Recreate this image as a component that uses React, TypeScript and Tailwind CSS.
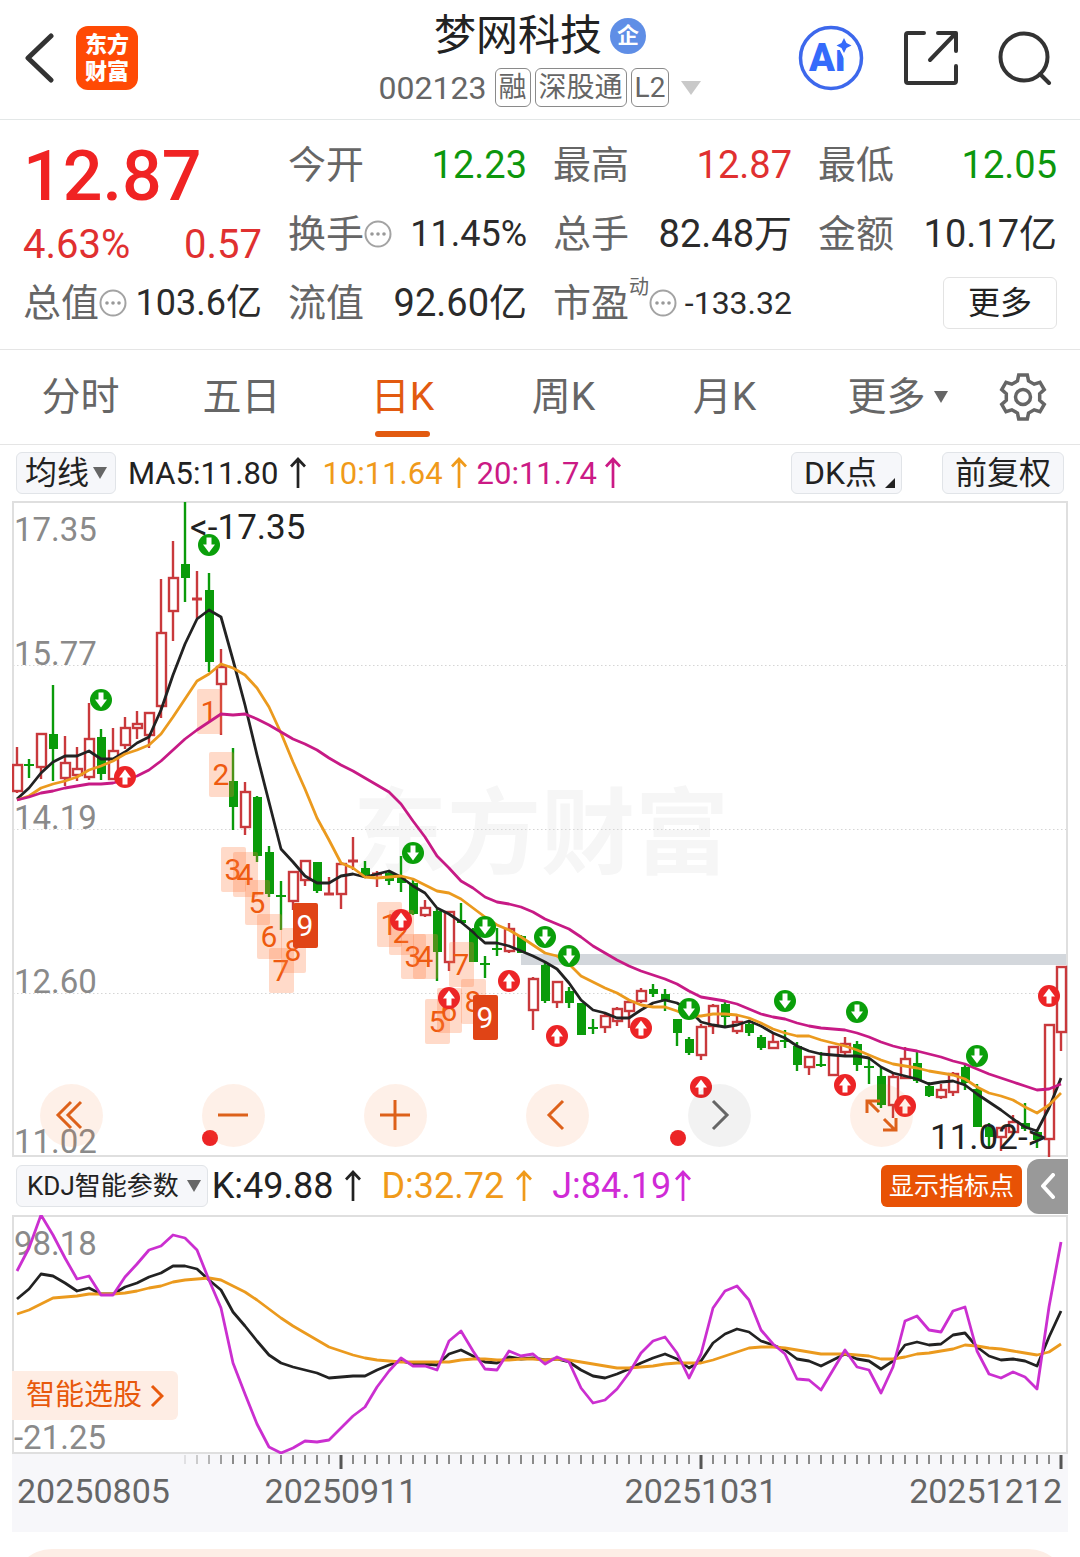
import { useState } from 'react'
import type { ReactNode } from 'react'
import { clsx } from 'clsx'

type Candle = [high: number, top: number, bottom: number, low: number, dir: 'up' | 'down']

// Vertical positions in the canvas, one row per trading day
const candles: Candle[] = [
  [747, 765, 791, 793, 'up'], [759, 765, 765, 778, 'down'], [733, 734, 767, 779, 'up'], [685, 734, 749, 781, 'down'],
  [736, 763, 778, 786, 'up'], [747, 769, 775, 781, 'up'], [703, 739, 777, 780, 'up'], [729, 737, 774, 780, 'down'],
  [728, 751, 779, 779, 'up'], [717, 728, 745, 749, 'up'], [711, 724, 728, 739, 'up'], [712, 713, 735, 748, 'up'],
  [579, 633, 706, 718, 'up'], [541, 578, 611, 641, 'up'], [502, 564, 578, 602, 'down'], [571, 599, 599, 618, 'up'],
  [573, 590, 662, 672, 'down'], [649, 667, 684, 735, 'up'], [748, 781, 807, 830, 'down'], [782, 792, 827, 835, 'up'],
  [796, 797, 856, 862, 'down'], [846, 852, 894, 897, 'down'], [881, 896, 896, 930, 'down'], [872, 872, 901, 910, 'up'],
  [861, 861, 880, 886, 'up'], [862, 862, 891, 893, 'down'], [877, 894, 894, 894, 'up'], [864, 864, 894, 909, 'up'],
  [837, 861, 861, 870, 'up'], [861, 868, 875, 877, 'down'], [871, 874, 874, 887, 'up'], [872, 873, 881, 885, 'down'],
  [856, 876, 883, 892, 'down'], [880, 883, 914, 915, 'down'], [900, 908, 915, 917, 'up'], [909, 911, 952, 981, 'down'],
  [912, 912, 962, 971, 'up'], [903, 920, 923, 923, 'down'], [928, 929, 962, 962, 'down'], [956, 964, 964, 978, 'down'],
  [928, 949, 949, 956, 'down'], [923, 929, 951, 953, 'up'], [935, 936, 953, 953, 'down'], [977, 979, 1010, 1030, 'up'],
  [963, 965, 1001, 1003, 'down'], [982, 982, 1002, 1008, 'up'], [987, 991, 1003, 1008, 'down'], [1003, 1003, 1035, 1035, 'down'],
  [1019, 1028, 1028, 1034, 'down'], [1013, 1016, 1027, 1033, 'up'], [1007, 1009, 1021, 1026, 'up'], [1000, 1002, 1011, 1028, 'up'],
  [988, 991, 1001, 1003, 'up'], [984, 989, 994, 997, 'down'], [989, 994, 1000, 1011, 'down'], [1019, 1019, 1033, 1046, 'down'],
  [1037, 1039, 1053, 1055, 'down'], [1024, 1027, 1055, 1060, 'up'], [1004, 1006, 1026, 1034, 'up'], [1002, 1004, 1017, 1027, 'down'],
  [1016, 1022, 1031, 1034, 'up'], [1022, 1024, 1033, 1036, 'down'], [1035, 1037, 1048, 1050, 'down'], [1033, 1042, 1048, 1048, 'up'],
  [1030, 1041, 1041, 1048, 'down'], [1042, 1046, 1065, 1071, 'down'], [1056, 1057, 1067, 1075, 'up'], [1052, 1065, 1065, 1067, 'down'],
  [1047, 1047, 1075, 1075, 'up'], [1037, 1044, 1052, 1057, 'up'], [1041, 1044, 1065, 1071, 'down'], [1058, 1067, 1067, 1084, 'down'],
  [1067, 1076, 1105, 1108, 'down'], [1072, 1077, 1105, 1118, 'up'], [1047, 1059, 1078, 1078, 'up'], [1052, 1063, 1081, 1083, 'down'],
  [1082, 1086, 1096, 1097, 'down'], [1084, 1090, 1097, 1099, 'up'], [1072, 1074, 1092, 1096, 'up'], [1065, 1067, 1083, 1090, 'down'],
  [1084, 1089, 1127, 1127, 'down'], [1123, 1127, 1137, 1147, 'down'], [1128, 1128, 1137, 1151, 'up'], [1115, 1122, 1132, 1134, 'up'],
  [1103, 1123, 1129, 1131, 'down'], [1130, 1132, 1140, 1148, 'down'], [1025, 1025, 1139, 1157, 'up'], [967, 967, 1032, 1051, 'up'],
]

const ma5 = [
  799, 788, 773, 762, 756, 756, 751, 759, 759, 752, 743, 737, 710, 675, 644, 619, 610, 617, 660, 705, 755, 802,
  849, 862, 876, 883, 883, 876, 874, 877, 874, 871, 877, 886, 893, 908, 914, 922, 932, 943, 943, 946, 951, 956,
  962, 969, 983, 1000, 1010, 1013, 1018, 1018, 1010, 1003, 1000, 1003, 1010, 1022, 1025, 1027, 1025, 1021, 1026,
  1033, 1038, 1046, 1051, 1054, 1055, 1056, 1056, 1058, 1067, 1073, 1076, 1079, 1084, 1082, 1081, 1085, 1094,
  1102, 1110, 1119, 1127, 1131, 1108, 1078,
]
const ma10 = [
  800, 796, 788, 784, 781, 777, 770, 766, 761, 754, 750, 745, 734, 717, 699, 681, 674, 664, 668, 675, 688, 707,
  733, 762, 789, 818, 840, 863, 868, 877, 878, 877, 876, 879, 885, 891, 893, 899, 908, 917, 925, 930, 937, 945,
  953, 956, 964, 976, 982, 988, 993, 1000, 1005, 1007, 1007, 1011, 1016, 1016, 1014, 1014, 1015, 1018, 1023,
  1029, 1033, 1036, 1036, 1040, 1043, 1046, 1050, 1055, 1060, 1064, 1066, 1068, 1071, 1073, 1075, 1079, 1087,
  1093, 1096, 1100, 1107, 1113, 1105, 1093,
]
const ma20 = [
  800, 797, 793, 791, 788, 786, 784, 784, 783, 780, 776, 770, 761, 750, 739, 730, 722, 714, 715, 714, 719, 725,
  732, 739, 744, 750, 758, 765, 771, 778, 785, 792, 804, 821, 837, 856, 868, 881, 888, 897, 902, 904, 907, 912,
  919, 924, 929, 937, 946, 953, 960, 966, 971, 975, 979, 984, 991, 997, 999, 1001, 1004, 1009, 1014, 1017, 1019,
  1023, 1026, 1028, 1029, 1030, 1033, 1037, 1042, 1046, 1049, 1051, 1054, 1057, 1061, 1064, 1069, 1074, 1078,
  1082, 1086, 1090, 1089, 1084,
]

const kLine = [
  1299, 1289, 1274, 1276, 1283, 1291, 1288, 1294, 1294, 1287, 1283, 1277, 1273, 1266, 1266, 1269, 1280, 1290,
  1312, 1326, 1341, 1355, 1363, 1367, 1370, 1373, 1378, 1377, 1376, 1376, 1370, 1365, 1361, 1364, 1364, 1365,
  1354, 1350, 1356, 1362, 1363, 1357, 1359, 1358, 1360, 1359, 1362, 1370, 1376, 1378, 1374, 1369, 1363, 1358,
  1354, 1359, 1368, 1361, 1343, 1334, 1329, 1332, 1341, 1345, 1350, 1359, 1361, 1366, 1360, 1354, 1359, 1361,
  1369, 1361, 1345, 1342, 1345, 1344, 1335, 1333, 1347, 1356, 1360, 1359, 1361, 1366, 1337, 1311,
]
const dLine = [
  1314, 1310, 1304, 1298, 1297, 1296, 1294, 1294, 1294, 1293, 1291, 1288, 1286, 1282, 1280, 1279, 1278, 1280,
  1286, 1292, 1300, 1309, 1318, 1326, 1333, 1340, 1347, 1351, 1355, 1358, 1360, 1361, 1362, 1362, 1362, 1362,
  1362, 1360, 1359, 1359, 1360, 1360, 1359, 1359, 1360, 1359, 1360, 1362, 1364, 1366, 1368, 1368, 1367, 1366,
  1364, 1363, 1363, 1363, 1360, 1356, 1352, 1348, 1347, 1347, 1348, 1350, 1352, 1354, 1354, 1354, 1355, 1356,
  1359, 1359, 1357, 1354, 1353, 1351, 1349, 1345, 1346, 1348, 1349, 1351, 1353, 1355, 1352, 1344,
]
const jLine = [
  1271, 1248, 1215, 1235, 1258, 1279, 1276, 1295, 1295, 1277, 1264, 1250, 1246, 1235, 1238, 1250, 1280, 1308,
  1363, 1394, 1424, 1447, 1453, 1448, 1441, 1442, 1440, 1428, 1416, 1407, 1387, 1371, 1358, 1366, 1366, 1370,
  1341, 1331, 1351, 1369, 1370, 1351, 1356, 1354, 1364, 1357, 1362, 1388, 1403, 1400, 1389, 1373, 1353, 1341,
  1337, 1353, 1378, 1354, 1308, 1291, 1286, 1300, 1330, 1344, 1354, 1379, 1380, 1390, 1370, 1350, 1367, 1370,
  1393, 1367, 1321, 1316, 1330, 1332, 1311, 1307, 1351, 1374, 1378, 1372, 1377, 1389, 1307, 1242,
]

// [day index, top, digit]
const nineTurn: [number, number, number][] = [
  [16, 689, 1], [17, 752, 2], [18, 847, 3], [19, 852, 4], [20, 880, 5], [21, 914, 6], [22, 948, 7], [23, 928, 8], [24, 903, 9],
  [31, 902, 1], [32, 910, 2], [33, 934, 3], [34, 934, 4], [35, 999, 5], [36, 988, 6], [37, 942, 7], [38, 979, 8], [39, 995, 9],
]

const sellMarks = [[16, 545], [7, 700], [33, 853], [39, 927], [44, 937], [46, 956], [56, 1009], [64, 1001], [70, 1012], [80, 1056]]
const buyMarks = [[9, 777], [32, 920], [36, 998], [41, 981], [45, 1036], [52, 1028], [57, 1087], [69, 1085], [74, 1106], [86, 996]]

const dayX = (i: number) => 17 + i * 12
const toPoints = (ys: number[]) => ys.map((y, i) => `${dayX(i)},${y}`).join(' ')

const gearPath = (() => {
  const pts: string[] = []
  for (let t = 0; t < 6; t++) {
    for (const [r, off] of [[17, -19], [22.5, -11], [22.5, 11], [17, 19]]) {
      const a = ((t * 60 + off) * Math.PI) / 180
      pts.push(`${(24 + r * Math.sin(a)).toFixed(2)} ${(24 - r * Math.cos(a)).toFixed(2)}`)
    }
  }
  return `M${pts.join('L')}Z`
})()

function CandleBar({ i, data }: { i: number; data: Candle }) {
  const [high, top, bottom, low, dir] = data
  const x = dayX(i)
  const color = dir === 'up' ? '#c9393c' : '#0a9b0a'
  const flat = bottom - top < 2
  return (
    <g stroke={color} strokeWidth="2.400">
      <line x1={x} x2={x} y1={high} y2={flat ? low : top} />
      {!flat && <line x1={x} x2={x} y1={bottom} y2={low} />}
      {flat ? (
        <line x1={x - 5} x2={x + 5} y1={top} y2={top} strokeWidth={dir === 'up' ? 3 : 2} />
      ) : (
        <rect x={x - 4} y={top} width="9" height={bottom - top} fill={dir === 'up' ? 'white' : color} strokeWidth={dir === 'up' ? 2.4 : 0} />
      )}
    </g>
  )
}

function Mark({ i, y, up }: { i: number; y: number; up?: boolean }) {
  return (
    <g transform={`translate(${dayX(i)} ${y})${up ? ' rotate(180)' : ''}`}>
      <circle r="11" fill={up ? '#ec2426' : '#0a9f0a'} />
      <path d="M-2.500 -7.500h5v7h3.500L0 7.500L-6 -.500h3.500z" fill="white" />
    </g>
  )
}

function UpArrow() {
  return (
    <svg viewBox="0 0 16 32" className="h-8 w-4" fill="none" stroke="currentColor" strokeWidth="2.700" aria-hidden="true">
      <path d="M8 31V2M1 9.500L8 2l7 7.500" />
    </svg>
  )
}

function Caret({ className }: { className?: string }) {
  return (
    <svg viewBox="0 0 14 12" className={clsx('h-3 w-3.5', className)} fill="currentColor" aria-hidden="true">
      <path d="M0 0h14L7 12z" />
    </svg>
  )
}

function Hint() {
  return (
    <svg viewBox="0 0 28 28" className="h-7 w-7 shrink-0" fill="none" stroke="#a3a3a3" strokeWidth="2" aria-hidden="true">
      <circle cx="14" cy="14" r="12.500" />
      <g fill="#999" stroke="none">
        <circle cx="8" cy="14" r="1.800" />
        <circle cx="14" cy="14" r="1.800" />
        <circle cx="20" cy="14" r="1.800" />
      </g>
    </svg>
  )
}

function Quote({ label, hint, sup, tone, size, children }: {
  label: string
  hint?: boolean
  sup?: string
  tone?: string
  size?: string
  children: ReactNode
}) {
  return (
    <div className="flex h-[69px] items-center justify-between">
      <dt className="flex items-center text-[38px] text-[#666]">
        {label}
        {sup && <span className="mb-8 text-xl">{sup}</span>}
        {hint && <Hint />}
      </dt>
      <dd className={clsx(tone ?? 'text-[#2b2b2b]', size ?? 'text-[38px]')}>{children}</dd>
    </div>
  )
}

function Tag({ children }: { children: ReactNode }) {
  return <span className="flex h-[39px] items-center rounded-md border border-[#8a8a8a] px-[3px] text-[28px]">{children}</span>
}

const chipClass = 'flex h-[42px] items-center rounded-md border border-[#e1e4e8] bg-[#f6f7fa] text-[#222]'

function Header() {
  return (
    <header className="grid h-[120px] grid-cols-[1fr_auto_1fr] items-center border-b border-[#e3e7e7] px-6 pb-1">
      <div className="flex items-center gap-[22px]">
        <button type="button" aria-label="返回">
          <svg viewBox="0 0 30 50" className="h-[50px] w-[30px]" fill="none" stroke="#333" strokeWidth="5" strokeLinecap="round" strokeLinejoin="round">
            <path d="M27 3L4 25l23 22" />
          </svg>
        </button>
        <div className="flex h-16 w-[62px] flex-col items-center justify-center rounded-xl bg-[#ff4a05] text-[22px] leading-[27px] font-black text-white">
          <span>东方</span>
          <span>财富</span>
        </div>
      </div>

      <div className="flex flex-col items-center gap-1">
        <div className="flex h-14 items-center gap-2">
          <h1 className="text-[42px] text-[#222]">梦网科技</h1>
          <span className="flex h-9 w-9 items-center justify-center rounded-full bg-[#5f8ee6] text-[22px] font-bold text-white">企</span>
        </div>
        <div className="flex items-center gap-1 text-[#666]">
          <span className="mr-1 text-[32px]">002123</span>
          <Tag>融</Tag>
          <Tag>深股通</Tag>
          <Tag>L2</Tag>
          <svg viewBox="0 0 20 14" className="ml-2 h-3.5 w-5" fill="#c9c9c9" aria-hidden="true">
            <path d="M0 0h20L10 14z" />
          </svg>
        </div>
      </div>

      <div className="flex items-center justify-end gap-10 pr-1">
        <button type="button" aria-label="Ai">
          <svg viewBox="0 0 66 66" className="h-[66px] w-[66px]">
            <circle cx="33" cy="33" r="30.500" fill="none" stroke="#3d68ec" strokeWidth="3.500" />
            <text x="11" y="46" fontSize="38" fontWeight="900" fill="#356bfb">Ai</text>
            <path d="M46 13l2.500 5 5 2.500-5 2.500-2.500 5-2.500-5-5-2.500 5-2.500z" fill="#356bfb" stroke="white" strokeWidth="5" paintOrder="stroke" />
          </svg>
        </button>
        <button type="button" aria-label="分享">
          <svg viewBox="0 0 54 54" className="h-[54px] w-[54px]" fill="none" stroke="#333" strokeWidth="4" strokeLinecap="round" strokeLinejoin="round">
            <path d="M20 2H4a2 2 0 0 0-2 2v46a2 2 0 0 0 2 2h46a2 2 0 0 0 2-2V35M34 2h18v18M51 3L26 29" />
          </svg>
        </button>
        <button type="button" aria-label="搜索">
          <svg viewBox="0 0 54 54" className="h-[54px] w-[54px]" fill="none" stroke="#333" strokeWidth="4" strokeLinecap="round">
            <circle cx="26" cy="26" r="23.500" />
            <path d="M42 43l9 9" />
          </svg>
        </button>
      </div>
    </header>
  )
}

function Quotes() {
  return (
    <section className="grid grid-cols-4 gap-x-[26px] border-b border-[#e5e5e5] px-[23px] pt-2.5 pb-3">
      <div>
        <div className="flex h-[92px] items-center text-[70px] font-medium text-[#f02323]">12.87</div>
        <div className="flex h-[46px] items-center justify-between text-[40px] text-[#e03030]">
          <span>4.63%</span>
          <span>0.57</span>
        </div>
        <dl><Quote label="总值" hint size="text-[36px]">103.6亿</Quote></dl>
      </div>
      <dl>
        <Quote label="今开" tone="text-[#0d970d]">12.23</Quote>
        <Quote label="换手" hint size="text-[36px]">11.45%</Quote>
        <Quote label="流值">92.60亿</Quote>
      </dl>
      <dl>
        <Quote label="最高" tone="text-[#e03030]">12.87</Quote>
        <Quote label="总手">82.48万</Quote>
        <Quote label="市盈" sup="动" hint size="text-[32px]">-133.32</Quote>
      </dl>
      <div>
        <dl>
          <Quote label="最低" tone="text-[#0d970d]">12.05</Quote>
          <Quote label="金额">10.17亿</Quote>
        </dl>
        <div className="flex h-[69px] items-center justify-end">
          <button type="button" className="h-[52px] rounded-md border border-[#e3e3e3] px-6 text-[32px] text-[#222]">更多</button>
        </div>
      </div>
    </section>
  )
}

function Tabs() {
  const [active, setActive] = useState('日K')
  return (
    <nav className="grid h-[95px] grid-cols-[repeat(6,1fr)_114px] border-b border-[#e5e5e5] text-[39px]">
      {['分时', '五日', '日K', '周K', '月K', '更多'].map(name => (
        <button
          key={name}
          type="button"
          onClick={() => setActive(name)}
          className={clsx(
            'relative flex items-center justify-center gap-2',
            name === active ? 'text-[#e25a10]' : 'text-[#666]',
            name === '更多' && 'pl-6',
          )}
        >
          {name}
          {name === '更多' && <Caret />}
          {name === active && <span className="absolute bottom-[7px] h-1.5 w-[55px] rounded-full bg-[#e25a10]" />}
        </button>
      ))}
      <button type="button" aria-label="设置" className="flex items-center justify-center">
        <svg viewBox="0 0 48 48" className="h-12 w-12" fill="none" stroke="#666" strokeWidth="3.500">
          <path d={gearPath} />
          <circle cx="24" cy="24" r="7.500" />
        </svg>
      </button>
    </nav>
  )
}

function MaBar() {
  return (
    <div className="flex h-14 items-center px-4 text-[31px]">
      <button type="button" className={clsx(chipClass, 'gap-1 px-2 text-[32px]')}>
        均线
        <Caret className="text-[#666]" />
      </button>
      <span className="ml-3 flex items-center gap-3 text-[#222]">MA5:11.80<UpArrow /></span>
      <span className="ml-4 flex items-center gap-2 text-[#f09a1a]">10:11.64<UpArrow /></span>
      <span className="ml-2.5 flex items-center gap-2 text-[#cb1a85]">20:11.74<UpArrow /></span>
      <button type="button" className={clsx(chipClass, 'ml-auto gap-2 pr-1.5 pl-3 text-[32px]')}>
        DK点
        <svg viewBox="0 0 10 10" className="mt-5 h-2.5 w-2.5" fill="#222" aria-hidden="true">
          <path d="M10 0v10H0z" />
        </svg>
      </button>
      <button type="button" className={clsx(chipClass, 'ml-10 px-3 text-[32px]')}>前复权</button>
    </div>
  )
}

const tools = [
  { label: '最左', d: 'M31 18L18 31l13 13M41 18L28 31l13 13' },
  { label: '缩小', d: 'M16 31h30' },
  { label: '放大', d: 'M16 31h30M31 16v30' },
  { label: '左移', d: 'M37 17L23 31l14 14' },
  { label: '右移', d: 'M25 17l14 14-14 14', disabled: true },
  { label: '全屏', d: 'M29 28L18 17M17 29V17h13M34 35l11 11M46 34v12H33' },
]

function PriceChart() {
  return (
    <div className="relative mx-3">
      <svg viewBox="12 501 1056 656" className="block w-full">
        <text x="541" y="867" fontSize="94" fontWeight="700" fill="#f6f6f6" textAnchor="middle">东方财富</text>
        <rect x="521" y="954" width="547" height="11" fill="#d3d7dc" />
        <g stroke="#d5d5d5" strokeDasharray="1.500 2.500">
          <path d="M13 665.500H1067M13 829.500H1067M13 993.500H1067" />
        </g>
        <rect x="13" y="502" width="1054" height="654" fill="none" stroke="#dfdfdf" strokeWidth="2" />

        {candles.map((c, i) => <CandleBar key={i} i={i} data={c} />)}

        {nineTurn.map(([i, y, n]) => (
          <g key={`${i}-${n}`}>
            <rect x={dayX(i) - 12} y={y} width="25" height="45" rx="2" fill={n === 9 ? '#e04416' : '#ff7a3d'} fillOpacity={n === 9 ? 1 : 0.28} />
            <text x={dayX(i)} y={y + 33} fontSize="30" textAnchor="middle" fill={n === 9 ? 'white' : '#ee5a10'}>{n}</text>
          </g>
        ))}

        <g fill="none" strokeWidth="2.800" strokeLinejoin="round">
          <polyline points={toPoints(ma5)} stroke="#222" />
          <polyline points={toPoints(ma10)} stroke="#eb9a1e" />
          <polyline points={toPoints(ma20)} stroke="#c71a85" />
        </g>

        <g fill="#8a8a8a" fontSize="33">
          <text x="14" y="541">17.35</text>
          <text x="14" y="665">15.77</text>
          <text x="14" y="829">14.19</text>
          <text x="14" y="993">12.60</text>
          <text x="14" y="1153">11.02</text>
        </g>
        <g fill="#222" fontSize="35">
          <text x="190" y="539">&lt;-17.35</text>
          <text x="930" y="1149">11.02-&gt;</text>
        </g>

        {sellMarks.map(([i, y]) => <Mark key={i} i={i} y={y} />)}
        {buyMarks.map(([i, y]) => <Mark key={i} i={i} y={y} up />)}
        <circle cx="210" cy="1138" r="8" fill="#ec2426" />
        <circle cx="678" cy="1138" r="8" fill="#ec2426" />
      </svg>

      <div className="absolute inset-x-7 bottom-2.5 flex gap-[99px]">
        {tools.map(t => (
          <button
            key={t.label}
            type="button"
            aria-label={t.label}
            disabled={t.disabled}
            className={clsx('h-[63px] w-[63px] rounded-full', t.disabled ? 'bg-black/5 text-[#666]' : 'bg-[#f5691c]/10 text-[#dd611a]')}
          >
            <svg viewBox="0 0 63 63" className="h-full w-full" fill="none" stroke="currentColor" strokeWidth="3">
              <path d={t.d} />
            </svg>
          </button>
        ))}
      </div>
    </div>
  )
}

function KdjBar() {
  return (
    <div className="flex h-[58px] items-center pr-3 pl-4 text-[36px]">
      <button type="button" className={clsx(chipClass, 'gap-2 pr-1.5 pl-2.5 text-[26px]')}>
        KDJ智能参数
        <Caret className="text-[#666]" />
      </button>
      <span className="ml-1 flex items-center gap-3 text-[#222]">K:49.88<UpArrow /></span>
      <span className="ml-5 flex items-center gap-3 text-[#f09a1a]">D:32.72<UpArrow /></span>
      <span className="ml-5 flex items-center gap-1 text-[#d02ad6]">J:84.19<UpArrow /></span>
      <button type="button" className="ml-auto h-[42px] rounded-md bg-[#e85205] px-2 text-[25px] text-white">显示指标点</button>
      <button type="button" aria-label="收起" className="ml-[5px] flex h-[55px] w-[41px] items-center justify-center rounded-l-xl bg-[#999]">
        <svg viewBox="0 0 16 26" className="h-[26px] w-4" fill="none" stroke="white" strokeWidth="4" strokeLinecap="round" strokeLinejoin="round">
          <path d="M13 2L3 13l10 11" />
        </svg>
      </button>
    </div>
  )
}

function KdjChart() {
  return (
    <div className="relative mx-3">
      <svg viewBox="12 1215 1056 239" className="block w-full">
        <rect x="13" y="1216" width="1054" height="237" fill="none" stroke="#dfdfdf" strokeWidth="2" />
        <g fill="#8a8a8a" fontSize="33">
          <text x="14" y="1255">98.18</text>
          <text x="14" y="1449">-21.25</text>
        </g>
        <g fill="none" strokeWidth="2.800" strokeLinejoin="round">
          <polyline points={toPoints(kLine)} stroke="#222" />
          <polyline points={toPoints(dLine)} stroke="#eb9a1e" />
          <polyline points={toPoints(jLine)} stroke="#cb2fd0" />
        </g>
      </svg>
      <a href="#pick" className="absolute bottom-[34px] left-0 flex h-[49px] items-center gap-2 rounded-r-md bg-[#feede4] px-3.5 text-[29px] text-[#e8590c]">
        智能选股
        <svg viewBox="0 0 14 24" className="h-6 w-3.5" fill="none" stroke="currentColor" strokeWidth="3" aria-hidden="true">
          <path d="M2 2l10 10L2 22" />
        </svg>
      </a>
    </div>
  )
}

function DateAxis() {
  const majors = [27, 57, 87]
  return (
    <div className="mx-3 bg-[#f7f7fa]">
      <svg viewBox="12 1454 1056 78" className="block w-full">
        {candles.map((_, i) => {
          if (i < 14) return null
          const major = majors.includes(i)
          return (
            <line
              key={i}
              x1={dayX(i)}
              x2={dayX(i)}
              y1="1455"
              y2={major ? 1469 : 1464}
              stroke={major ? '#555' : '#8a8a8a'}
              strokeWidth={major ? 3 : 2}
              opacity={i < 18 ? (i - 13) / 5 : 1}
            />
          )
        })}
        <g fill="#666" fontSize="34">
          <text x="17" y="1503">20250805</text>
          <text x="341" y="1503" textAnchor="middle">20250911</text>
          <text x="701" y="1503" textAnchor="middle">20251031</text>
          <text x="1062" y="1503" textAnchor="end">20251212</text>
        </g>
      </svg>
    </div>
  )
}

export default function App() {
  return (
    <main className="min-h-screen bg-white font-['Roboto','Noto_Sans_CJK_SC',sans-serif] leading-none">
      <Header />
      <Quotes />
      <Tabs />
      <MaBar />
      <PriceChart />
      <KdjBar />
      <KdjChart />
      <DateAxis />
      <div className="mx-3 mt-[17px] h-2 overflow-hidden">
        <div className="h-20 rounded-full bg-[#fdeee6]" />
      </div>
    </main>
  )
}
